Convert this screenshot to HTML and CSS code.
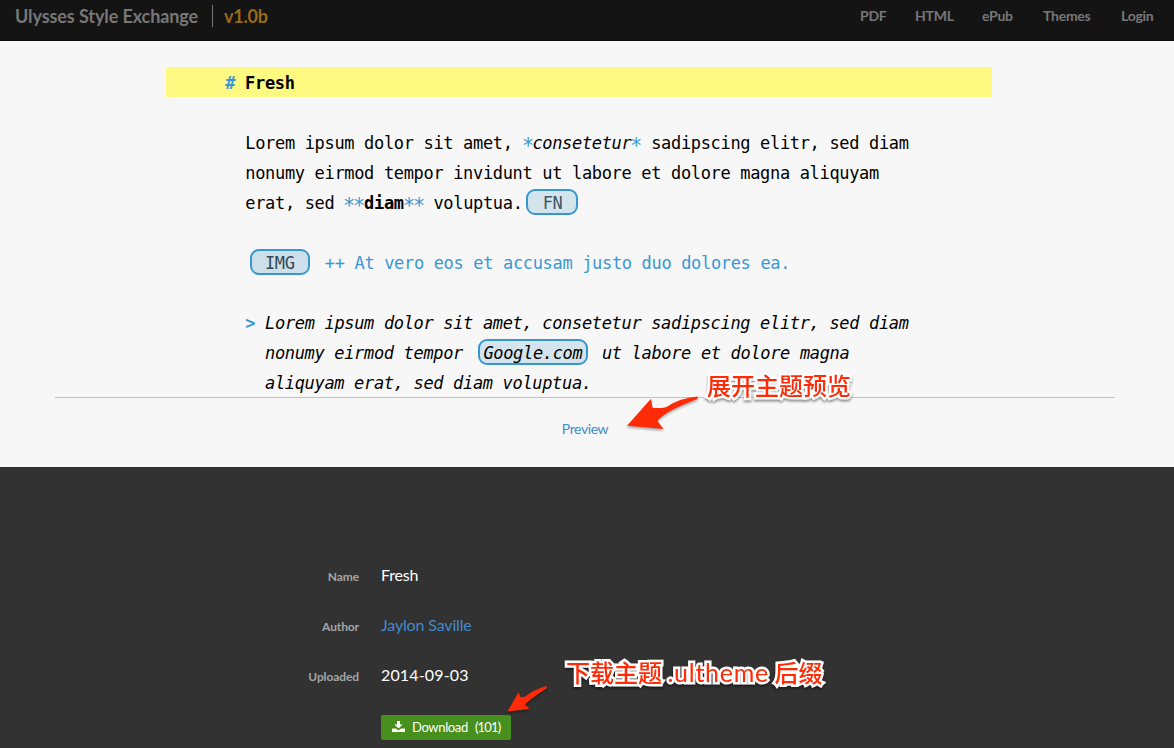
FILE: index.html
```html
<!DOCTYPE html>
<html lang="en">
<head>
<meta charset="utf-8">
<title>Ulysses Style Exchange</title>
<link rel="stylesheet" href="styles.css">
</head>
<body>
<header class="navbar">
  <div class="brand"><span class="brand-name">Ulysses Style Exchange</span><span class="version">v1.0b</span></div>
  <nav class="menu"><a class="m-pdf">PDF</a><a class="m-html">HTML</a><a class="m-epub">ePub</a><a class="m-themes">Themes</a><a class="m-login">Login</a></nav>
</header>
<main class="preview">
  <div class="sheet">
    <div class="line heading"><span class="tag">#</span> Fresh</div>
    <div class="line"></div>
    <div class="line">Lorem ipsum dolor sit amet, <span class="tag star">*</span><em>consetetur</em><span class="tag star">*</span> sadipscing elitr, sed diam</div>
    <div class="line">nonumy eirmod tempor invidunt ut labore et dolore magna aliquyam</div>
    <div class="line">erat, sed <span class="tag star">*</span><span class="tag star">*</span><b>diam</b><span class="tag star">*</span><span class="tag star">*</span> voluptua.<span class="chip fn">FN</span></div>
    <div class="line"></div>
    <div class="line comment"><span class="chip img">IMG</span>++ At vero eos et accusam justo duo dolores ea.</div>
    <div class="line"></div>
    <div class="line quote"><span class="tag mark">&gt; </span>Lorem ipsum dolor sit amet, consetetur sadipscing elitr, sed diam</div>
    <div class="line quote more">nonumy eirmod tempor <span class="chip link">Google.com</span>ut labore et dolore magna</div>
    <div class="line quote more">aliquyam erat, sed diam voluptua.</div>
  </div>
  <div class="toggle"><a>Preview</a></div>
</main>
<section class="details">
  <dl class="fields">
    <dt class="k-name">Name</dt><dd class="v-name">Fresh</dd>
    <dt class="k-author">Author</dt><dd class="v-author"><a>Jaylon Saville</a></dd>
    <dt class="k-uploaded">Uploaded</dt><dd class="v-date">2014-09-03</dd>
  </dl>
  <a class="download">
    <svg class="dl-icon" viewBox="0 0 13 12" width="13" height="12"><path fill="#fff" d="M5 0h3v3.500h2.600L6.500 7.600 2.400 3.500H5zM.6 7.500h3.200l2.700 1.900 2.700-1.900h3.200q.6 0 .6.600v2.300q0 .6-.6.600H.6q-.6 0-.6-.6V8.100q0-.6.600-.6z"/></svg>
    <span class="dl-label">Download</span><span class="dl-count">(101)</span>
  </a>
</section>
<svg class="arrows" width="1174" height="748" viewBox="0 0 1174 748">
  <path d="M697.500 396.600Q680 398 666 407.200Q660 408.500 652.500 407.800L651 398.800 627 425.800 663.500 429 657.500 421Q664 411.500 697.500 399z"/>
  <path d="M546.500 686Q534 689.500 524.500 697L520.500 697 518.500 692.300 507.500 711.500 529.500 709 525 704.500Q529 700 547 688z"/>
</svg>
<div class="note note-preview">展开主题预览</div>
<div class="note note-download">下载主题 <span class="ext">.ultheme</span> 后缀</div>
</body>
</html>
```
FILE: styles.css
```css
* { box-sizing: border-box; }
body { margin: 0; width: 1174px; height: 748px; overflow: hidden; background: #323232; font-family: Lato, sans-serif; position: relative; }

.navbar { height: 41px; background: #141414; border-bottom: 1px solid #0c0c0c; display: flex; justify-content: space-between; padding: 5px 20px 0 15px; color: #777; }
.brand { display: flex; height: 22px; line-height: 22px; font-size: 18px; font-weight: 700; white-space: nowrap; }
.brand-name { width: 198px; border-right: 1px solid #777; letter-spacing: -.1px; }
.version { margin-left: 11px; color: #9b6a17; letter-spacing: -.2px; }
.menu { display: flex; gap: 30px; font-size: 14px; line-height: 22px; font-weight: 700; }
.m-pdf { width: 25px; }
.m-html { width: 37px; }
.m-epub { width: 31px; }
.m-themes { width: 48px; }
.m-login { width: 33px; }
.menu a { white-space: nowrap; letter-spacing: -.25px; }

.preview { height: 426px; background: #f7f7f7; padding-top: 26px; }
.sheet { width: 826px; margin-left: 166px; font-family: "DejaVu Sans Mono", monospace; font-size: 17px; letter-spacing: -.335px; color: #000; }
.line { height: 30px; line-height: 33px; padding-left: 79.3px; white-space: pre; }
.heading { line-height: 32px; padding-left: 59.3px; background: #fef980; font-weight: 700; }
.tag, .comment { color: #3b97d3; }
.star { display: inline-block; line-height: 20px; transform: translateY(3px) scale(1.2); }
.quote { font-style: italic; }
.mark { font-style: normal; font-weight: 700; }
.more { padding-left: 99px; }
.chip { display: inline-block; height: 26px; line-height: 25px; border: 2px solid #3797d1; border-radius: 9px; background: #d4e4ed; color: #3f5663; text-align: center; vertical-align: top; margin-top: 2px; }
.fn { width: 52px; margin-left: 3.500px; padding-left: 1px; }
.img { width: 60px; margin: 2px 15px 0 4.5px; background: #cddfeb; color: #344955; }
.link { width: 110px; margin: 2px 14px 0 5px; color: #000; }
.toggle { width: 1060px; margin-left: 55px; border-top: 1px solid #c1c1c1; text-align: center; padding-top: 21px; font-size: 14px; line-height: 20px; letter-spacing: -.4px; color: #428bca; }

.details { padding: 94px 0 0 259px; }
.fields { display: grid; grid-template-columns: 100px 300px; column-gap: 22px; grid-auto-rows: 50px; margin: 0; line-height: 28px; }
dt { text-align: right; font-size: 12px; font-weight: 700; color: #a5a5a5; line-height: 32px; letter-spacing: -.1px; }
dd { margin: 0; font-size: 16px; color: #fff; }
dd a { color: #428bca; letter-spacing: -.15px; }
.v-name { letter-spacing: -.2px; }
.v-date { letter-spacing: .15px; }
.download { display: flex; width: 130px; height: 25px; margin: 4px 0 0 122px; padding: 0 0 1px 11px; align-items: center; background: #48901d; border-radius: 2px; color: #fff; font-size: 13px; white-space: nowrap; }
.dl-label { width: 56px; margin: 0 7px; letter-spacing: -.35px; }
.dl-count { letter-spacing: -.85px; }

.arrows { position: absolute; left: 0; top: 0; pointer-events: none; fill: #ff2b06; filter: drop-shadow(0 2px 1px rgba(0, 0, 0, .3)); }
.note { position: absolute; white-space: pre; color: #ff2b06; font-family: "Noto Sans CJK SC", sans-serif; font-weight: 500; font-size: 24px; line-height: 30px; -webkit-text-stroke: 5px #fff; paint-order: stroke fill; stroke-linejoin: round; filter: drop-shadow(0 2px 1px rgba(0, 0, 0, .4)); }
.note-preview { left: 707px; top: 370px; }
.note-download { left: 566px; top: 657px; }
.ext { font-family: Lato, sans-serif; font-weight: 400; font-size: 25px; letter-spacing: .75px; }
```
